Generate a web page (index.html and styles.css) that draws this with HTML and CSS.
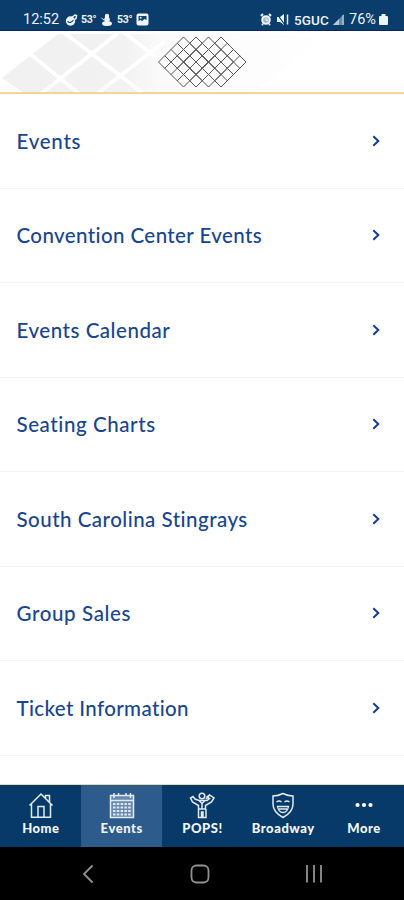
FILE: index.html
```html
<!DOCTYPE html>
<html lang="en">
<head>
<meta charset="utf-8">
<title>Events</title>
<link rel="stylesheet" href="styles.css">
</head>
<body>
<div class="statusbar">
  <div class="status-left">
    <span class="clock">12:52</span>
    <svg class="s-weather" width="14" height="14" viewBox="0 0 14 14"><circle cx="6.500" cy="8" r="4.700" fill="#eef4fa"/><path d="M3.500 8.500q3 2.500 6-1.500" fill="none" stroke="#0a3c6c" stroke-width="1.100"/><path d="M7 5l4-3 1.500.5-.5 3-1.500 1" fill="none" stroke="#eef4fa" stroke-width="1.500"/></svg>
    <span class="temp">53°</span>
    <svg class="s-snow" width="12" height="14" viewBox="0 0 12 14"><circle cx="6" cy="3" r="2.200"/><circle cx="6" cy="6.500" r="2.800"/><ellipse cx="6" cy="10.500" rx="5" ry="2.500"/><path d="M3 7L.5 5M3 12l5-.2" stroke="#eef4fa"/></svg>
    <span class="temp">53°</span>
    <svg class="s-photo" width="13" height="13" viewBox="0 0 13 13"><rect x=".5" y=".5" width="12" height="12" rx="2"/><path d="M2.500 3h8v4l-2-1-2.500 2-1.500-1-2 1z" fill="#124272"/><circle cx="4.700" cy="4.700" r="1"/></svg>
  </div>
  <div class="status-right">
    <svg class="s-alarm" width="12" height="13" viewBox="0 0 12 13"><circle cx="6" cy="7" r="4.800"/><path d="M1 3l2-2M11 3L9 1M2 12l1-1M10 12l-1-1" stroke="#eef4fa" stroke-width="2"/><circle cx="6" cy="7" r="2.800" fill="#9db3c8"/><path d="M6 5v2.300h2" fill="none" stroke="#fff"/></svg>
    <svg class="s-mute" width="12" height="13" viewBox="0 0 12 13"><path d="M0 4h3l4-3v11L3 9H0z"/><path d="M0 1l8 11" stroke="#0a3c6c" stroke-width="1.200"/><path d="M10.500 1.500v10" stroke="#eef4fa" stroke-width="1.500"/></svg>
    <span class="network">5GUC</span>
    <svg class="s-signal" width="11" height="11" viewBox="0 0 11 11"><path d="M0 11L11 0v11z" fill="#6889aa"/><path d="M0 11l6-6v6z" fill="#b8c9d8"/><path d="M10 1v10" stroke="#c9d6e2"/></svg>
    <span class="charge">76%</span>
    <svg class="s-battery" width="9" height="11" viewBox="0 0 9 11"><path d="M2.500 0h4v2H8q1 0 1 1v7q0 1-1 1H1q-1 0-1-1V3q0-1 1-1h1.500z"/></svg>
  </div>
</div>

<header class="header">
  <svg width="404" height="61" viewBox="0 31 404 61">
    <defs>
      <linearGradient id="fade" gradientUnits="userSpaceOnUse" x1="0" y1="0" x2="330" y2="0">
        <stop offset="0" stop-color="#f0f0f0"/><stop offset=".38" stop-color="#f2f2f2"/><stop offset=".48" stop-color="#fafafa"/><stop offset="1" stop-color="#fff"/>
      </linearGradient>
      <path id="grid" d="M158.500 62l25-25M164.750 68.250l25-25M171 74.500l25-25M177.250 80.750l25-25M183.500 87l25-25M158.500 62l25 25M164.750 55.750l25 25M171 49.500l25 25M177.250 43.250l25 25M183.500 37l25 25"/>
    </defs>
    <path d="M2 78L58 34h272L252 93H24z" fill="url(#fade)"/>
    <path d="M29 53l49 40M62 31l81 62M122 31l44 34M118 33L42 93M164 42L98 93" fill="none" stroke="#fff" stroke-width="4"/>
    <g fill="none" stroke="#555" stroke-width="1">
      <use href="#grid"/><use href="#grid" x="12.500"/><use href="#grid" x="25"/><use href="#grid" x="37.500"/>
    </g>
  </svg>
</header>

<main class="list">
  <a class="row"><span class="t1">Events</span><svg class="chev" viewBox="0 0 8 12"><path d="M1.300 1.200L6.300 6l-5 4.800"/></svg></a>
  <a class="row"><span class="t2">Convention Center Events</span><svg class="chev" viewBox="0 0 8 12"><path d="M1.300 1.200L6.300 6l-5 4.800"/></svg></a>
  <a class="row"><span class="t3">Events Calendar</span><svg class="chev" viewBox="0 0 8 12"><path d="M1.300 1.200L6.300 6l-5 4.800"/></svg></a>
  <a class="row"><span class="t4">Seating Charts</span><svg class="chev" viewBox="0 0 8 12"><path d="M1.300 1.200L6.300 6l-5 4.800"/></svg></a>
  <a class="row"><span class="t5">South Carolina Stingrays</span><svg class="chev" viewBox="0 0 8 12"><path d="M1.300 1.200L6.300 6l-5 4.800"/></svg></a>
  <a class="row"><span class="t6">Group Sales</span><svg class="chev" viewBox="0 0 8 12"><path d="M1.300 1.200L6.300 6l-5 4.800"/></svg></a>
  <a class="row"><span class="t7">Ticket Information</span><svg class="chev" viewBox="0 0 8 12"><path d="M1.300 1.200L6.300 6l-5 4.800"/></svg></a>
</main>

<nav class="tabs">
  <a class="tab">
    <svg width="28" height="28" viewBox="0 0 28 28"><path d="M2.500 14.500L14 3l11.500 11.500M4.500 13v13.300h19V13M18.500 7V4.500h4V11M11 26V15.500h6V26"/></svg>
    <span>Home</span>
  </a>
  <a class="tab active">
    <svg width="28" height="28" viewBox="0 0 28 28"><path fill="#6789ae" d="M2.500 4.500h23v22h-23z"/><path d="M2.500 9.500h23M6 2v5M10.500 2v3M18 2v3M22.500 2v5"/><path d="M5 13h18M5 16.500h18M5 20h18M5 23.500h18" stroke-width="1.800" stroke-dasharray="2.500 1.300"/></svg>
    <span>Events</span>
  </a>
  <a class="tab">
    <svg width="28" height="28" viewBox="0 0 28 28"><circle cx="14" cy="5" r="2.800"/><path d="M11 9.500L7 8 5 5.500 2.500 7l2 4 6 3.500V18h7v-3.500l6-3.500 2.500-4-4.500-3-2.500 2 2.500 1.500-2.500 2zM11 9.500l3 3 3-3M14 12v6M10.500 18v8.500h3V21h1.500v5.500h3V18M18 8l3-3"/></svg>
    <span>POPS!</span>
  </a>
  <a class="tab">
    <svg width="28" height="28" viewBox="0 0 28 28"><path d="M4 5q5 0 10-2.500Q19 5 24 5v8q0 8-10 13.500Q4 21 4 13z"/><path d="M7.500 11q2.500-2 5 0M15.500 11q2.500-2 5 0M8.500 15.500h11q-1 6-5.500 6t-5.500-6zM10 18h8" stroke-width="1.300"/></svg>
    <span>Broadway</span>
  </a>
  <a class="tab">
    <svg width="28" height="28" viewBox="0 0 28 28"><g fill="#fff" stroke="none"><circle cx="7.500" cy="14" r="2.100"/><circle cx="14" cy="14" r="2.100"/><circle cx="20.500" cy="14" r="2.100"/></g></svg>
    <span>More</span>
  </a>
</nav>

<div class="sysnav">
  <svg width="12" height="20" viewBox="0 0 12 20"><path d="M10.500 1.500L2 10l8.500 8.500"/></svg>
  <svg width="20" height="20" viewBox="0 0 20 20"><rect x="1.500" y="1.500" width="17" height="17" rx="5"/></svg>
  <svg width="18" height="20" viewBox="0 0 18 20"><path d="M2 1v17.500M9 1v17.500M16 1v17.500"/></svg>
</div>
</body>
</html>
```
FILE: styles.css
```css
* { box-sizing: border-box; }
body {
  margin: 0;
  width: 404px;
  height: 900px;
  overflow: hidden;
  display: flex;
  flex-direction: column;
  background: #fff;
  font-family: Lato, "Open Sans", sans-serif;
}
svg { display: block; flex: none; }
.statusbar {
  height: 31px;
  flex: none;
  display: flex;
  justify-content: space-between;
  align-items: center;
  padding: 9px 16px 0 23px;
  background: #0a3c6c;
  border-bottom: 1px solid #0b2466;
  color: #eef4fa;
  fill: #eef4fa;
  font-family: Roboto, sans-serif;
}
.status-left, .status-right { display: flex; align-items: center; white-space: nowrap; }
.clock { font-size: 14.5px; width: 36px; margin-right: 5px; }
.temp { font-size: 10.5px; font-weight: 700; width: 15px; letter-spacing: -0.3px; }
.s-weather { margin-right: 3px; }
.s-snow { margin: 0 4px 0 5px; }
.s-photo { margin-left: 4px; }
.s-mute { margin-left: 5px; }
.network { font-size: 13.5px; font-weight: 500; width: 36px; margin-left: 5px; letter-spacing: 0.1px; }
.s-signal { margin: 0 5px 0 3px; }
.charge { font-size: 14.5px; width: 29px; }
.s-battery { margin-left: 1px; }

.header { height: 63px; flex: none; border-bottom: 2px solid #f4d596; overflow: hidden; }

.list { flex: 1; min-height: 0; overflow: hidden; border-bottom: 1px solid #e2dcae; }
.row {
  height: 94.5px;
  display: flex;
  align-items: center;
  justify-content: space-between;
  padding: 0 24px 0 16.5px;
  border-bottom: 1px solid #f4f4f6;
  color: #17458f;
  font-size: 20.5px;
  font-weight: 500;
  white-space: nowrap;
}
.t1 { letter-spacing: 0.75px; }
.t2 { letter-spacing: 0.4px; }
.t3 { letter-spacing: 0.53px; }
.t4 { letter-spacing: 0.58px; }
.t5 { letter-spacing: 0.48px; }
.t6 { letter-spacing: 0.63px; }
.t7 { letter-spacing: 0.36px; }
.chev { width: 8px; height: 12px; fill: none; stroke: #123c91; stroke-width: 2; }

.tabs { height: 62.5px; flex: none; display: grid; grid-template-columns: repeat(5, 1fr); background: #073a68; }
.tab {
  display: flex;
  flex-direction: column;
  align-items: center;
  padding: 6px 0 0 1px;
  color: #f2f6fb;
  font-size: 13px;
  font-weight: 900;
  line-height: 16px;
  letter-spacing: 0.55px;
}
.tab svg { fill: none; stroke: #e2eaf4; stroke-width: 1.5; }
.tab span { margin-top: 1px; }
.active { background: #2d5b8b; }

.sysnav {
  height: 53px;
  flex: none;
  display: flex;
  justify-content: space-between;
  align-items: center;
  padding: 0 81px 0 82px;
  background: #000;
  fill: none;
  stroke: #929292;
  stroke-width: 1.8;
}
```
